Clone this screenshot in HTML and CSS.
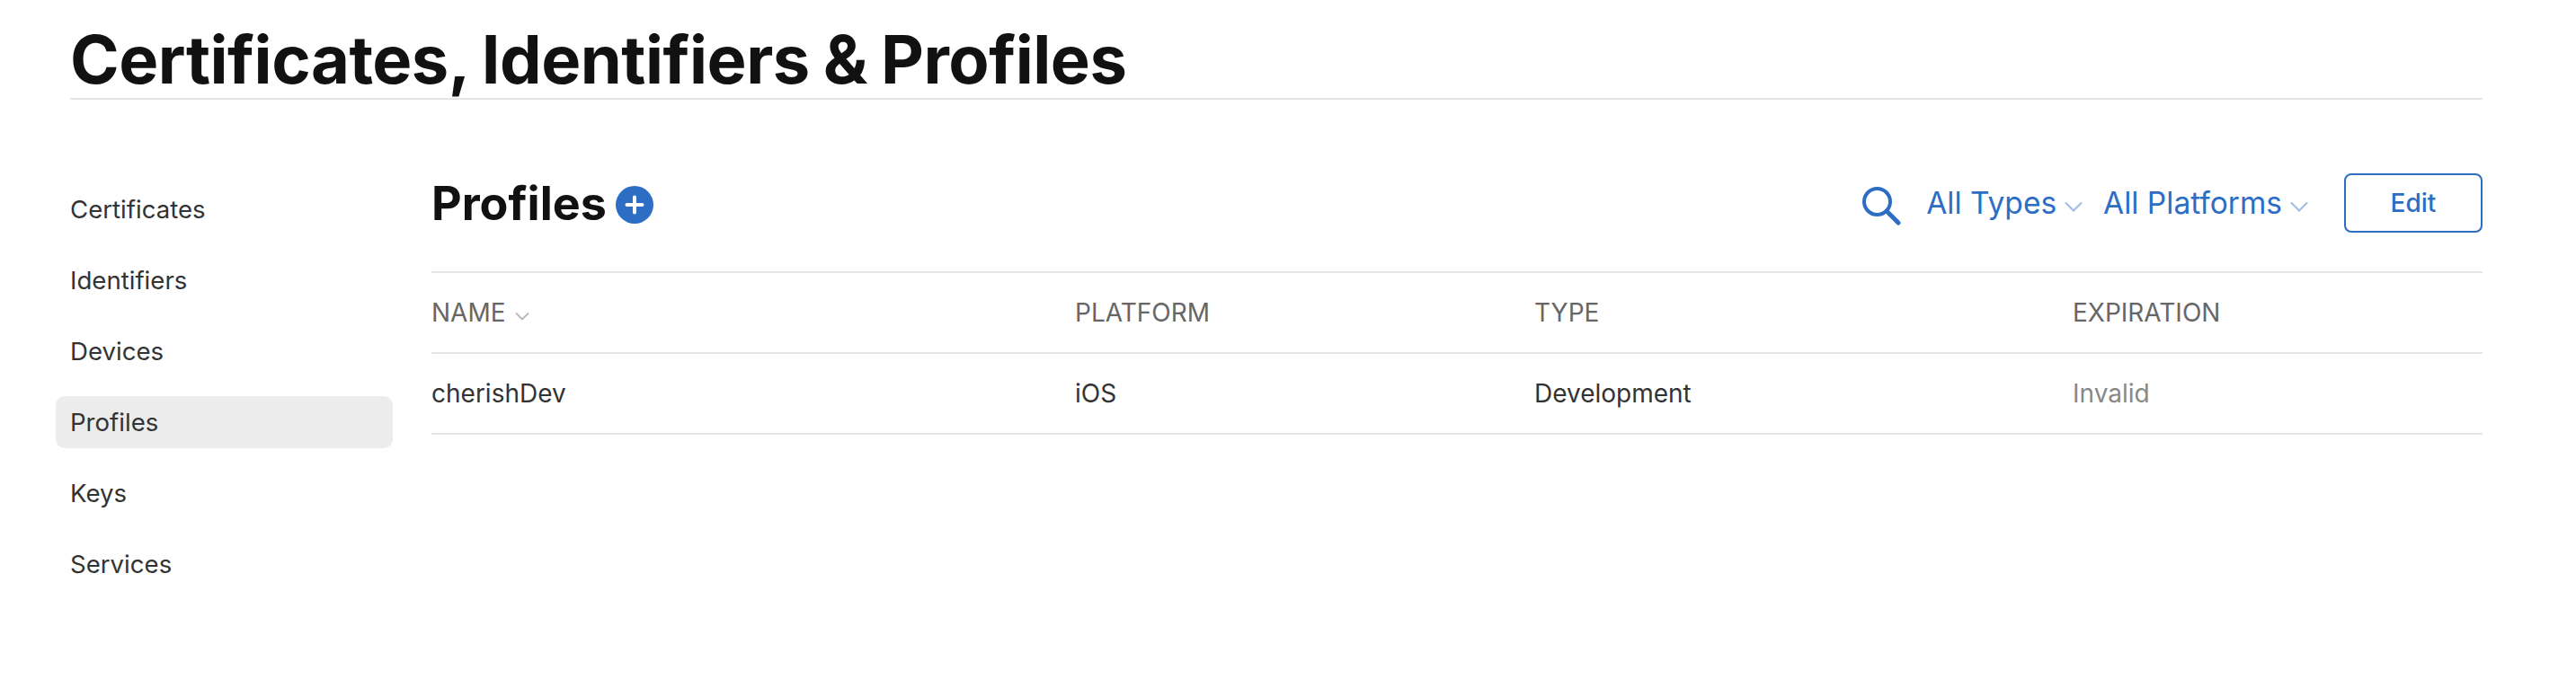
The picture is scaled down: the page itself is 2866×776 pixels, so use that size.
FILE: index.html
```html
<!DOCTYPE html>
<html lang="en">
<head>
<meta charset="utf-8">
<title>Certificates, Identifiers &amp; Profiles</title>
<link rel="stylesheet" href="styles.css">
</head>
<body>
<div class="page">
  <header class="page-header"><h1>Certificates, Identifiers &amp; Profiles</h1></header>
  <div class="layout">
    <nav class="sidebar">
      <a class="nav-item">Certificates</a>
      <a class="nav-item">Identifiers</a>
      <a class="nav-item">Devices</a>
      <a class="nav-item active">Profiles</a>
      <a class="nav-item">Keys</a>
      <a class="nav-item">Services</a>
    </nav>
    <main class="content">
      <div class="toolbar">
        <div class="heading">
          <h2>Profiles</h2>
          <svg class="add" viewBox="0 0 42 42"><circle cx="21" cy="21" r="21" fill="#2d6dc4"/><path d="M21 12.5v17M12.5 21h17" stroke="#fff" stroke-width="4" stroke-linecap="round"/></svg>
        </div>
        <div class="controls">
          <svg class="search" viewBox="0 0 44 44"><circle cx="17.500" cy="17.500" r="14.500" fill="none" stroke="#2d6dc4" stroke-width="4"/><path d="M28 28l13 13" stroke="#2d6dc4" stroke-width="5" stroke-linecap="round"/></svg>
          <span class="filter first">All Types<svg class="chev" viewBox="0 0 20 12"><path d="M1 1.500l9 9 9-9" fill="none" stroke="#a3bfe6" stroke-width="2.200"/></svg></span>
          <span class="filter">All Platforms<svg class="chev" viewBox="0 0 20 12"><path d="M1 1.500l9 9 9-9" fill="none" stroke="#a3bfe6" stroke-width="2.200"/></svg></span>
          <button class="edit">Edit</button>
        </div>
      </div>
      <div class="row head">
        <div class="cell c1">NAME<svg class="sort" viewBox="0 0 16 10"><path d="M1 1.500L8 8.500l7-7" fill="none" stroke="#b8b8b8" stroke-width="1.800"/></svg></div>
        <div class="cell c2">PLATFORM</div>
        <div class="cell c3">TYPE</div>
        <div class="cell c4">EXPIRATION</div>
      </div>
      <div class="row body">
        <div class="cell c1">cherishDev</div>
        <div class="cell c2">iOS</div>
        <div class="cell c3">Development</div>
        <div class="cell c4 muted">Invalid</div>
      </div>
    </main>
  </div>
</div>
</body>
</html>
```
FILE: styles.css
```css
* { box-sizing: border-box; }
html, body { margin: 0; padding: 0; background: #fff; }
body { font-family: Inter, "Liberation Sans", sans-serif; color: #111; }
.page { width: 2866px; height: 776px; padding: 0 104px 0 78px; overflow: hidden; }
.page-header { height: 111px; border-bottom: 2px solid #e5e5e5; }
h1 { margin: 0; padding-top: 22px; font-size: 74px; line-height: 88px; font-weight: 700; letter-spacing: -0.5px; word-spacing: -2px; white-space: nowrap; }
.layout { display: flex; padding-top: 79px; }
.sidebar { width: 418px; margin-left: -16px; flex: none; display: flex; flex-direction: column; gap: 21px; padding-top: 14px; }
.nav-item { display: block; width: 375px; height: 58px; line-height: 58px; padding-left: 16px; border-radius: 10px; font-size: 27.6px; color: #333; }
.nav-item.active { background: #ececec; }
.content { flex: 1; min-width: 0; }
.toolbar { display: flex; justify-content: space-between; align-items: center; height: 112px; padding-bottom: 40px; }
.heading { display: flex; align-items: center; gap: 10px; margin-top: 2px; }
h2 { margin: 0; font-size: 52px; line-height: 76px; font-weight: 700; }
.add { width: 42px; height: 42px; margin-top: 2px; }
.controls { display: flex; align-items: center; color: #2d6dc4; }
.search { width: 44px; height: 44px; margin-top: 6px; }
.filter { display: flex; align-items: center; font-size: 33.5px; line-height: 44px; margin-left: 23px; }
.filter.first { margin-left: 28px; }
.chev { width: 20px; height: 12px; margin-left: 9px; margin-top: 8px; }
.edit { width: 154px; height: 66px; margin-left: 40px; background: #fff; border: 2px solid #2d6dc4; border-radius: 8px; color: #2d6dc4; font: 500 28px Inter, sans-serif; }
.row { display: flex; align-items: center; height: 90px; border-bottom: 2px solid #e5e5e5; }
.row.head { border-top: 2px solid #e5e5e5; height: 92px; color: #666; }
.row.body { color: #333; }
.cell { font-size: 28px; line-height: 36px; }
.c1 { width: 716px; display: flex; align-items: center; }
.c2 { width: 511px; }
.c3 { width: 599px; }
.c4 { flex: 1; }
.sort { width: 16px; height: 10px; margin-left: 10px; margin-top: 8px; }
.muted { color: #888; }
```
